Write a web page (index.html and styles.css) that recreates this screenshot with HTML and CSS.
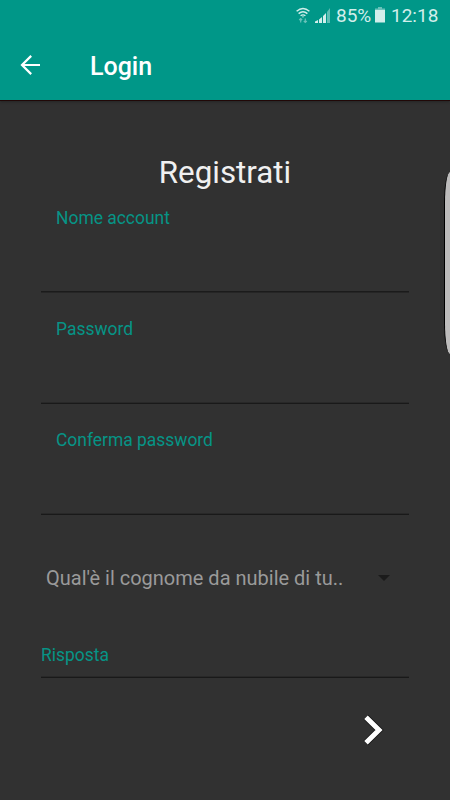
FILE: index.html
```html
<!DOCTYPE html>
<html lang="it">
<head>
<meta charset="utf-8">
<title>Login</title>
<link rel="stylesheet" href="styles.css">
</head>
<body>
<div class="screen">
  <header class="header">
    <div class="status">
      <svg class="wifi" width="14" height="17" viewBox="0 0 14 17" fill="none" stroke="currentColor">
        <path d="M.6 4.2Q7-1.4 13.4 4.2M2.6 6.6Q7 2.8 11.4 6.6M4.6 8.8Q7 7 9.4 8.8" stroke-width="1.4"/>
        <path d="M5.8 9.4h2.4L7 10.8z" fill="currentColor" stroke="none"/>
        <path d="M4.7 15.5v-4M3.2 13l1.5-1.5L6.2 13M9.3 11.5v4M7.8 14l1.5 1.5 1.5-1.5" stroke-width="1.2" opacity=".5"/>
      </svg>
      <svg class="signal" width="15" height="16" viewBox="0 0 15 16" fill="currentColor">
        <path d="M0 13.5L3 12v3H0zM4 11.5L7 9v6H4zM8 8l3-3v10H8z"/>
        <path d="M12 4l3-4v15h-3z" opacity=".45"/>
      </svg>
      <span class="percent">85%</span>
      <svg class="battery" width="10" height="16" viewBox="0 0 10 16" fill="currentColor">
        <path d="M3 0h4v1.5h3V3H0V1.5h3z" opacity=".5"/>
        <path d="M0 3h10v12.5H0z"/>
      </svg>
      <span class="clock">12:18</span>
    </div>
    <div class="toolbar">
      <svg class="back" width="20" height="20" viewBox="0 0 20 20" fill="none" stroke="#fff" stroke-width="2.2">
        <path d="M20 10H2M11.2.9L2 10l9.2 9.1"/>
      </svg>
      <span class="heading">Login</span>
    </div>
  </header>
  <main class="form">
    <h1 class="title"><span>Registrati</span></h1>
    <div class="field first"><label class="name">Nome account</label></div>
    <div class="field"><label class="pass">Password</label></div>
    <div class="field"><label class="confirm">Conferma password</label></div>
    <div class="select">
      <span class="question">Qual'è il cognome da nubile di tu..</span>
      <svg width="12" height="6" viewBox="0 0 12 6"><path d="M0 0h12L6 6z" fill="#1b1b1b"/></svg>
    </div>
    <div class="answer"><label class="reply">Risposta</label></div>
    <div class="actions">
      <svg width="22" height="34" viewBox="0 0 22 34" fill="none">
        <path d="M3.8 4L17 17 3.8 30" stroke="#151515" stroke-width="6.6"/>
        <path d="M4 4.2L17 17 4 29.8" stroke="#fff" stroke-width="5"/>
      </svg>
    </div>
  </main>
  <div class="edge"></div>
</div>
</body>
</html>
```
FILE: styles.css
```css
* { box-sizing: border-box; }
body { margin: 0; font-family: Roboto, sans-serif; }
.screen {
  position: relative;
  width: 450px;
  height: 800px;
  overflow: hidden;
  background: #313131;
}
svg { display: block; flex: none; }
span, label { white-space: nowrap; }
.header {
  height: 100px;
  background: #009788;
  box-shadow: 0 1px 0 #200807, 0 2px 2px #252525;
}
.status {
  display: flex;
  height: 32px;
  padding-left: 296px;
  color: #d2eeeb;
}
.wifi { margin-top: 7px; }
.signal { margin: 8px 0 0 5px; }
.percent, .clock { font-size: 19px; line-height: 32px; }
.percent { width: 35px; margin-left: 6px; }
.battery { margin: 7px 0 0 4px; }
.clock { margin-left: 6px; }
.toolbar {
  display: flex;
  align-items: center;
  height: 68px;
  padding-left: 20px;
}
.back { margin-top: -2px; }
.heading {
  margin: 2px 0 0 50px;
  color: #fff;
  font-size: 25px;
  font-weight: 500;
  line-height: 30px;
}
.form { padding: 53px 41px 0; }
.title {
  margin: 0 0 14px;
  color: #f0f0f0;
  font-size: 31.3px;
  font-weight: 400;
  line-height: 40px;
  text-align: center;
}
.field {
  height: 86px;
  margin-bottom: 25px;
  padding-left: 15px;
}
.field, .answer {
  border-bottom: 1px solid #191919;
  box-shadow: inset 0 -1px #282828;
}
.first {
  border-bottom-color: #252525;
  box-shadow: inset 0 -1px #1b1b1b;
}
label {
  display: block;
  color: #069486;
  font-size: 17.45px;
  line-height: 23px;
}
.select {
  display: flex;
  align-items: center;
  justify-content: space-between;
  height: 40px;
  margin-top: 43px;
  padding: 0 19px 0 5px;
  color: #9a9a9a;
  font-size: 20px;
}
.answer {
  height: 34px;
  margin-top: 46px;
}
.actions {
  display: flex;
  justify-content: flex-end;
  padding: 35px 25px 0 0;
}
.edge {
  position: absolute;
  top: 172px;
  right: 0;
  width: 6px;
  height: 182px;
  border-left: 1px solid #000;
  border-radius: 7px 0 0 7px / 36px 0 0 36px;
  background: #bdbcbc;
}
```
